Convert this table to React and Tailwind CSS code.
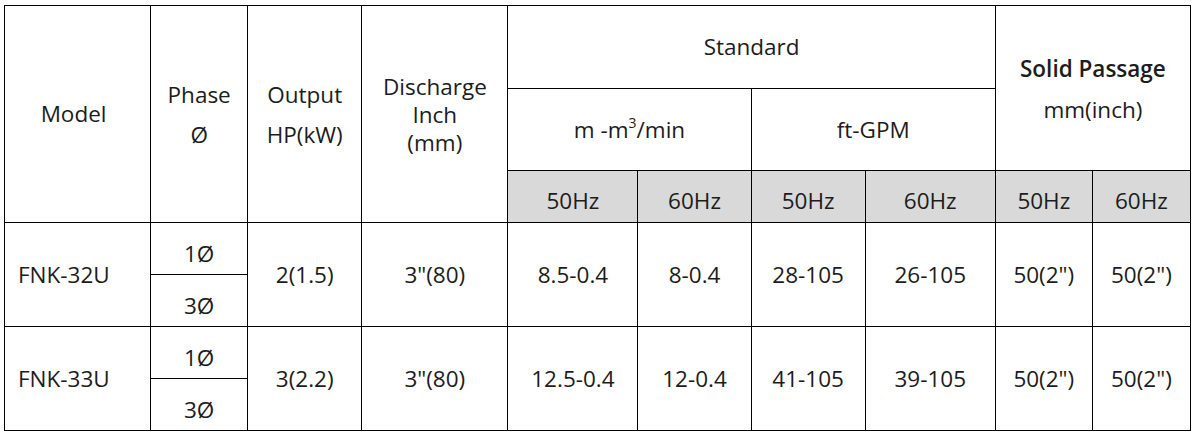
import React from 'react';

const cols = [146, 97, 114, 146, 130, 113, 114, 130, 97, 98];

const rows = [
  {
    model: 'FNK-32U',
    output: '2(1.5)',
    discharge: '3"(80)',
    values: ['8.5-0.4', '8-0.4', '28-105', '26-105', '50(2")', '50(2")'],
  },
  {
    model: 'FNK-33U',
    output: '3(2.2)',
    discharge: '3"(80)',
    values: ['12.5-0.4', '12-0.4', '41-105', '39-105', '50(2")', '50(2")'],
  },
];

const cell = 'border border-black text-center align-middle p-0';

const App = () => {
  return (
    <div className="bg-white w-[1196px] h-[435px] pt-[5px] pl-[4px] font-['Open_Sans',sans-serif] text-[22.5px] text-[#1c1c1c]">
      <table className="table-fixed border-collapse w-[1187px]">
        <colgroup>
          {cols.map((w, i) => (
            <col key={i} style={{ width: w }} />
          ))}
        </colgroup>
        <thead>
          <tr className="h-[83px]">
            <th rowSpan={3} className={`${cell} font-normal pr-[8px]`}>Model</th>
            <th rowSpan={3} className={`${cell} font-normal`}>
              <div className="flex flex-col items-center gap-[10px] leading-[30px] pt-[2px]">
                <span>Phase</span>
                <span>Ø</span>
              </div>
            </th>
            <th rowSpan={3} className={`${cell} font-normal`}>
              <div className="flex flex-col items-center gap-[10px] leading-[30px] pt-[2px]">
                <span>Output</span>
                <span>HP(kW)</span>
              </div>
            </th>
            <th rowSpan={3} className={`${cell} font-normal leading-[28px]`}>
              <div className="pt-[2px]">
                Discharge
                <br />
                Inch
                <br />
                (mm)
              </div>
            </th>
            <th colSpan={4} className={`${cell} font-normal`}>Standard</th>
            <th rowSpan={2} colSpan={2} className={`${cell} font-normal`}>
              <div className="flex flex-col items-center gap-[11px] leading-[30px] pt-[2px]">
                <span className="font-semibold">Solid Passage</span>
                <span>mm(inch)</span>
              </div>
            </th>
          </tr>
          <tr className="h-[82px]">
            <th colSpan={2} className={`${cell} font-normal`}>
              m -m<span className="text-[14px] relative -top-[10px]">3</span>/min
            </th>
            <th colSpan={2} className={`${cell} font-normal`}>ft-GPM</th>
          </tr>
          <tr className="h-[52px] bg-[#d9d9d9]">
            {['50Hz', '60Hz', '50Hz', '60Hz', '50Hz', '60Hz'].map((hz, i) => (
              <th key={i} className={`${cell} font-normal pt-[8px]`}>{hz}</th>
            ))}
          </tr>
        </thead>
        <tbody>
          {rows.map((r) => (
            <React.Fragment key={r.model}>
              <tr className="h-[52px]">
                <td rowSpan={2} className={`${cell} text-left pl-[13px]`}>{r.model}</td>
                <td className={`${cell} pt-[10px]`}>1Ø</td>
                <td rowSpan={2} className={cell}>{r.output}</td>
                <td rowSpan={2} className={cell}>{r.discharge}</td>
                {r.values.map((v, i) => (
                  <td key={i} rowSpan={2} className={cell}>{v}</td>
                ))}
              </tr>
              <tr className="h-[52px]">
                <td className={`${cell} pt-[10px]`}>3Ø</td>
              </tr>
            </React.Fragment>
          ))}
        </tbody>
      </table>
    </div>
  );
};

export default App;
